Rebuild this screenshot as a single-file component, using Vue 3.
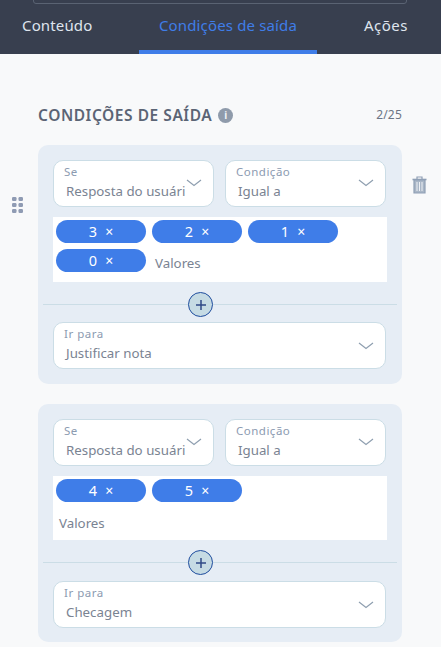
<script setup>
const cards = [
  { lines: [['3', '2', '1'], ['0']], inline: true, target: 'Justificar nota' },
  { lines: [['4', '5']], inline: false, target: 'Checagem' }
]
</script>

<template>
  <div class="page">
    <header class="head">
      <div class="search"></div>
      <nav class="tabs">
        <span class="tab first">Conteúdo</span>
        <span class="tab active">Condições de saída</span>
        <span class="tab last">Ações</span>
      </nav>
    </header>
    <main class="main">
      <div class="title-row">
        <h2 class="title">CONDIÇÕES DE SAÍDA</h2>
        <span class="info">i</span>
        <span class="count">2/25</span>
      </div>
      <section v-for="(card, i) in cards" :key="i" class="card" :class="{ second: i === 1 }">
        <svg v-if="i === 0" class="grip" width="11" height="16" viewBox="0 0 11 16" fill="#8f9bb3">
          <rect x="0" y="0" width="4.5" height="4" rx="1.2" /><rect x="6.5" y="0" width="4.5" height="4" rx="1.2" />
          <rect x="0" y="6" width="4.5" height="4" rx="1.2" /><rect x="6.5" y="6" width="4.5" height="4" rx="1.2" />
          <rect x="0" y="12" width="4.5" height="4" rx="1.2" /><rect x="6.5" y="12" width="4.5" height="4" rx="1.2" />
        </svg>
        <svg v-if="i === 0" class="trash" width="15" height="18" viewBox="0 0 15 18" fill="none" stroke="#8f9fb5">
          <path d="M0.5 3.5h14" stroke-width="1.6" />
          <path d="M5 3V1h5v2" stroke-width="1.2" />
          <path d="M2 4h11v13H2z" fill="#a9b6c6" stroke-width="1.2" />
          <path d="M5 6v9M7.5 6v9M10 6v9" stroke="#eef1f5" stroke-width="1" />
        </svg>
        <div class="row">
          <div class="select">
            <span class="label">Se</span>
            <span class="value clipped">Resposta do usuári</span>
            <svg class="chev high" width="16" height="8" viewBox="0 0 16 8" fill="none"><path d="M1 1l7 5.5L15 1" stroke="#8f9fb0" stroke-width="1.2" /></svg>
          </div>
          <div class="select">
            <span class="label">Condição</span>
            <span class="value">Igual a</span>
            <svg class="chev high" width="16" height="8" viewBox="0 0 16 8" fill="none"><path d="M1 1l7 5.5L15 1" stroke="#8f9fb0" stroke-width="1.2" /></svg>
          </div>
        </div>
        <div class="tags" :class="{ stacked: !card.inline }">
          <div v-for="(line, l) in card.lines" :key="l" class="line">
            <span v-for="t in line" :key="t" class="tag"><b class="num">{{ t }}</b><i class="x">×</i></span>
            <span v-if="card.inline && l === card.lines.length - 1" class="ph">Valores</span>
          </div>
          <span v-if="!card.inline" class="ph own">Valores</span>
        </div>
        <div class="divider">
          <span class="plus">
            <svg width="14" height="14" viewBox="0 0 14 14"><path d="M7 2v10M2 7h10" stroke="#2f4a86" stroke-width="1.5" /></svg>
          </span>
        </div>
        <div class="select wide">
          <span class="label">Ir para</span>
          <span class="value">{{ card.target }}</span>
          <svg class="chev" width="16" height="8" viewBox="0 0 16 8" fill="none"><path d="M1 1l7 5.5L15 1" stroke="#8f9fb0" stroke-width="1.2" /></svg>
        </div>
      </section>
    </main>
  </div>
</template>

<style scoped>
.page {
  width: 441px;
  height: 647px;
  overflow: hidden;
  background: #f8f9fa;
  font-family: "Noto Sans", "Open Sans", sans-serif;
}
.head {
  height: 54px;
  background: #383f4f;
  position: relative;
}
.search {
  position: absolute;
  left: 33px;
  top: -10px;
  width: 372px;
  height: 12px;
  border: 1px solid #5a6373;
  border-radius: 3px;
}
.tabs {
  display: flex;
  height: 54px;
}
.tab {
  font-size: 15px;
  line-height: 20px;
  color: #dfe5ee;
  padding-top: 15px;
  box-sizing: border-box;
  letter-spacing: 0.15px;
}
.first {
  margin-left: 22px;
  width: 117px;
}
.active {
  width: 178px;
  text-align: center;
  color: #3f7de8;
  border-bottom: 4px solid #3f7de8;
  white-space: nowrap;
}
.last {
  margin-left: 47px;
  letter-spacing: 0.5px;
}
.main {
  padding: 51px 0 0 38px;
  width: 364px;
}
.title-row {
  display: flex;
  align-items: center;
  height: 20px;
  margin-bottom: 20px;
}
.title {
  margin: 0;
  font-size: 15.5px;
  font-weight: 600;
  color: #5b6475;
  letter-spacing: 0.55px;
  white-space: nowrap;
}
.info {
  width: 15px;
  height: 15px;
  border-radius: 50%;
  background: #8f9bab;
  color: #eef1f4;
  font-size: 10px;
  font-weight: 700;
  line-height: 15px;
  text-align: center;
  margin-left: 6px;
}
.count {
  margin-left: auto;
  font-size: 12px;
  letter-spacing: 0.2px;
  color: #6c7585;
  position: relative;
  top: -1px;
}
.card {
  position: relative;
  box-sizing: border-box;
  height: 239px;
  background: #e6edf5;
  border-radius: 10px;
  padding: 15px 15px 0;
}
.card.second {
  margin-top: 20px;
  height: 238px;
}
.grip {
  position: absolute;
  left: -26px;
  top: 52px;
}
.trash {
  position: absolute;
  right: -25px;
  top: 31px;
}
.row {
  display: flex;
  gap: 11px;
  width: 333px;
}
.select {
  position: relative;
  box-sizing: border-box;
  flex: 1;
  height: 47px;
  background: #fff;
  border: 1px solid #cbdde6;
  border-radius: 10px;
  padding: 3px 0 0 10px;
  overflow: hidden;
}
.label {
  display: block;
  font-size: 11.5px;
  line-height: 15px;
  color: #8c9bb1;
  letter-spacing: 0.5px;
}
.value {
  display: block;
  margin: 3px 0 0 2px;
  font-size: 13.3px;
  line-height: 18px;
  color: #7a8392;
  white-space: nowrap;
}
.clipped {
  width: 120px;
  overflow: hidden;
}
.chev {
  position: absolute;
  right: 11px;
  top: 19px;
}
.chev.high {
  top: 18px;
}
.tags {
  box-sizing: border-box;
  width: 334px;
  height: 65px;
  margin-top: 10px;
  background: #fff;
  padding: 3px 3px 0;
}
.tags.stacked {
  height: 64px;
}
.line {
  display: flex;
  gap: 6px;
  height: 29px;
  align-items: flex-start;
}
.tag {
  box-sizing: border-box;
  width: 90px;
  height: 23px;
  background: #3f7de8;
  border-radius: 12px;
  color: #fff;
  font-size: 14px;
  line-height: 22px;
  text-align: center;
}
.num {
  font-weight: 400;
  font-size: 14.5px;
}
.x {
  font-style: normal;
  margin-left: 8px;
}
.ph {
  font-size: 13.3px;
  line-height: 18px;
  color: #7a8392;
  margin: 5px 0 0 3px;
}
.own {
  display: block;
  margin: 6px 0 0 3px;
}
.divider {
  position: relative;
  height: 1px;
  margin: 22px -10px 17px;
  background: #cbdde6;
}
.second .divider {
  margin-bottom: 18px;
}
.plus {
  position: absolute;
  left: 145px;
  top: -12px;
  box-sizing: border-box;
  width: 25px;
  height: 25px;
  border: 1.5px solid #1f4d9e;
  border-radius: 50%;
  background: #c6dbe4;
  display: flex;
  align-items: center;
  justify-content: center;
}
.wide {
  width: 333px;
  flex: none;
}
</style>
